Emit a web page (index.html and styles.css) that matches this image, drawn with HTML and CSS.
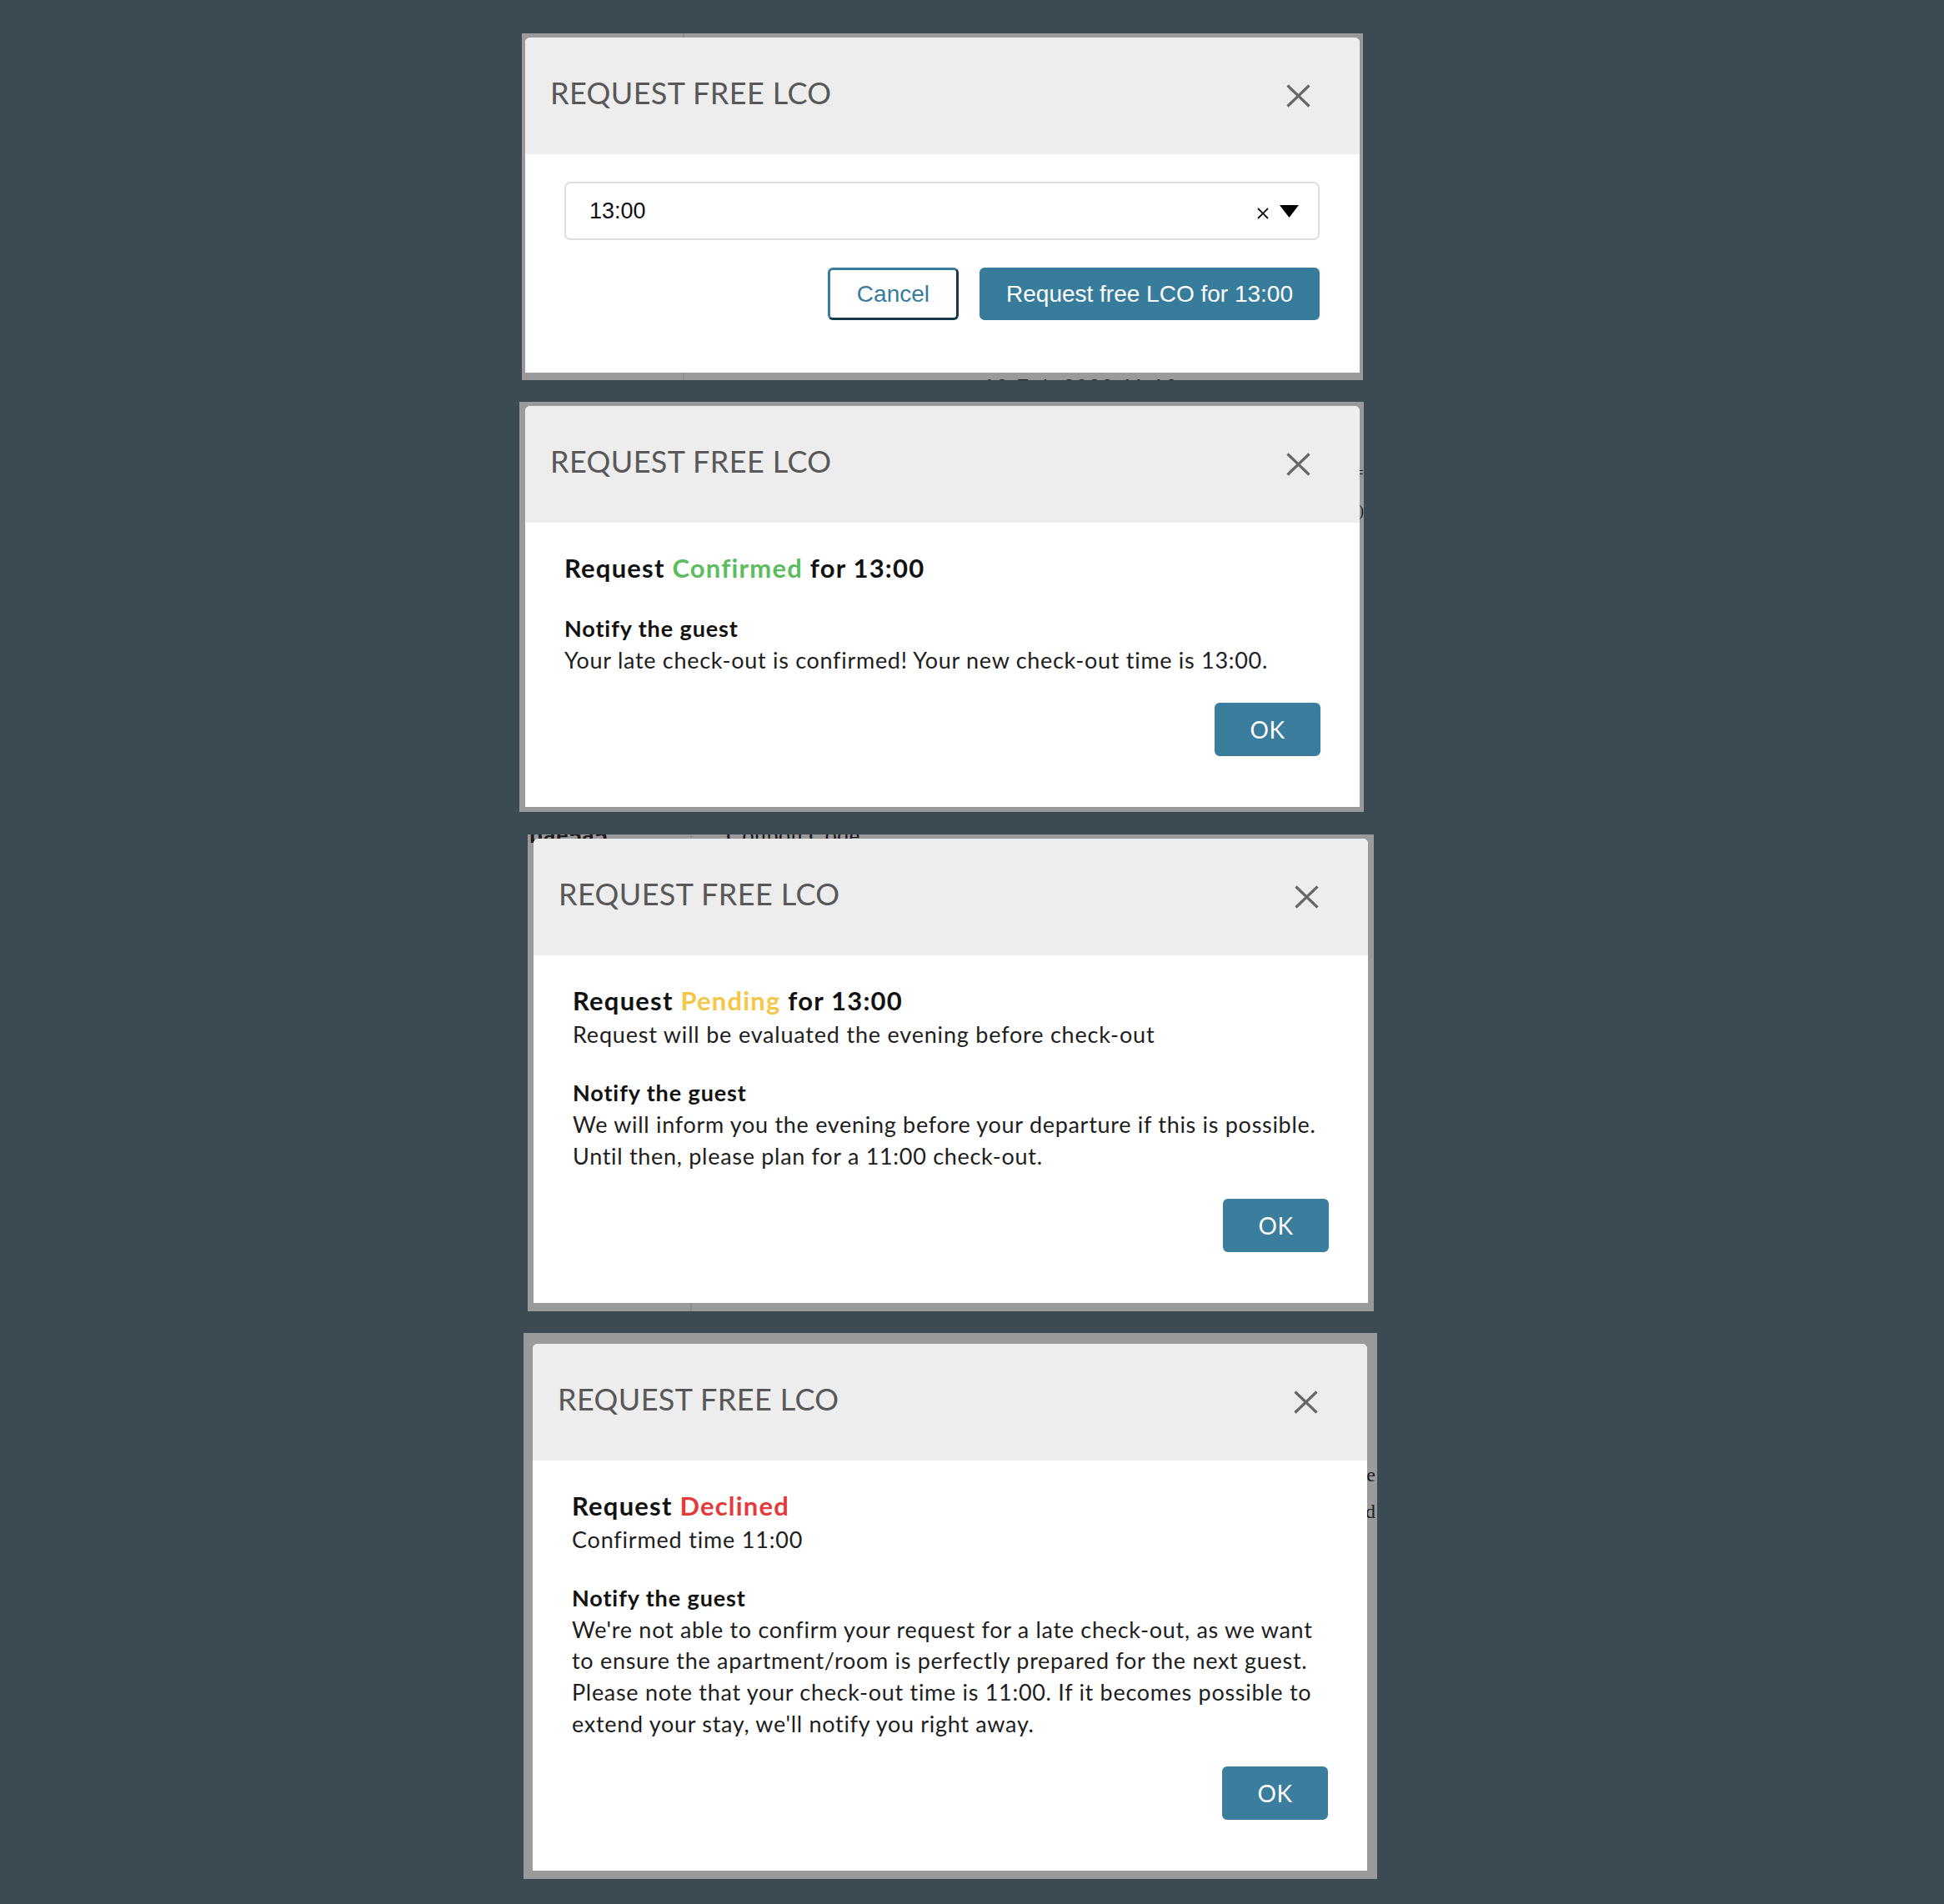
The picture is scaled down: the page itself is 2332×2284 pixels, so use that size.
FILE: index.html
```html
<!DOCTYPE html>
<html lang="en">
<head>
<meta charset="utf-8">
<title>Request free LCO</title>
<link rel="stylesheet" href="styles.css">
</head>
<body>
<main class="stack">

  <section class="frame frame--one">
    <span class="peek peek--bottom-one">10 Feb 2020 11:10</span>
    <div class="dialog">
      <header class="dialog__head">
        <h2 class="dialog__title">REQUEST FREE LCO</h2>
        <button class="dialog__close" aria-label="Close">
          <svg width="29" height="28" viewBox="0 0 29 28"><path d="M1.5 1.5 L27.5 26.5 M27.5 1.5 L1.5 26.5" stroke="#676767" stroke-width="3.2" fill="none"/></svg>
        </button>
      </header>
      <div class="dialog__body dialog__body--form">
        <div class="select">
          <span class="select__value">13:00</span>
          <span class="select__icons">
            <svg class="select__clear" width="16" height="14" viewBox="0 0 16 14"><path d="M2 1 L14 13 M14 1 L2 13" stroke="#111" stroke-width="1.8" fill="none"/></svg>
            <svg class="select__arrow" width="23" height="15" viewBox="0 0 23 15"><polygon points="0,0 23,0 11.5,15" fill="#000"/></svg>
          </span>
        </div>
        <div class="actions">
          <button class="btn btn--outline">Cancel</button>
          <button class="btn btn--primary">Request free LCO for 13:00</button>
        </div>
      </div>
    </div>
  </section>

  <section class="frame frame--two">
    <span class="peek peek--right-two-a">=</span>
    <span class="peek peek--right-two-b">)</span>
    <div class="dialog">
      <header class="dialog__head">
        <h2 class="dialog__title">REQUEST FREE LCO</h2>
        <button class="dialog__close" aria-label="Close">
          <svg width="29" height="28" viewBox="0 0 29 28"><path d="M1.5 1.5 L27.5 26.5 M27.5 1.5 L1.5 26.5" stroke="#676767" stroke-width="3.2" fill="none"/></svg>
        </button>
      </header>
      <div class="dialog__body">
        <h3 class="status">Request <span class="status__word status__word--confirmed">Confirmed</span> for 13:00</h3>
        <div class="notify">
          <h4 class="notify__title">Notify the guest</h4>
          <p class="notify__text">Your late check-out is confirmed! Your new check-out time is 13:00.</p>
        </div>
        <div class="footer">
          <button class="btn btn--ok">OK</button>
        </div>
      </div>
    </div>
  </section>

  <section class="frame frame--three">
    <span class="peek peek--top-a">bae5a5</span>
    <span class="peek peek--top-b">Coupon Code</span>
    <div class="dialog">
      <header class="dialog__head">
        <h2 class="dialog__title">REQUEST FREE LCO</h2>
        <button class="dialog__close" aria-label="Close">
          <svg width="29" height="28" viewBox="0 0 29 28"><path d="M1.5 1.5 L27.5 26.5 M27.5 1.5 L1.5 26.5" stroke="#676767" stroke-width="3.2" fill="none"/></svg>
        </button>
      </header>
      <div class="dialog__body">
        <h3 class="status">Request <span class="status__word status__word--pending">Pending</span> for 13:00</h3>
        <p class="status__sub">Request will be evaluated the evening before check-out</p>
        <div class="notify">
          <h4 class="notify__title">Notify the guest</h4>
          <p class="notify__text">We will inform you the evening before your departure if this is possible.<br>Until then, please plan for a 11:00 check-out.</p>
        </div>
        <div class="footer">
          <button class="btn btn--ok">OK</button>
        </div>
      </div>
    </div>
  </section>

  <section class="frame frame--four">
    <span class="peek peek--right-four-a">e</span>
    <span class="peek peek--right-four-b">d</span>
    <div class="dialog">
      <header class="dialog__head">
        <h2 class="dialog__title">REQUEST FREE LCO</h2>
        <button class="dialog__close" aria-label="Close">
          <svg width="29" height="28" viewBox="0 0 29 28"><path d="M1.5 1.5 L27.5 26.5 M27.5 1.5 L1.5 26.5" stroke="#676767" stroke-width="3.2" fill="none"/></svg>
        </button>
      </header>
      <div class="dialog__body">
        <h3 class="status">Request <span class="status__word status__word--declined">Declined</span></h3>
        <p class="status__sub">Confirmed time 11:00</p>
        <div class="notify">
          <h4 class="notify__title">Notify the guest</h4>
          <p class="notify__text">We're not able to confirm your request for a late check-out, as we want<br>to ensure the apartment/room is perfectly prepared for the next guest.<br>Please note that your check-out time is 11:00. If it becomes possible to<br>extend your stay, we'll notify you right away.</p>
        </div>
        <div class="footer">
          <button class="btn btn--ok">OK</button>
        </div>
      </div>
    </div>
  </section>

</main>
</body>
</html>
```

FILE: styles.css
```css
html, body {
  margin: 0;
  padding: 0;
  background: #3c4a54;
}

body {
  min-height: 2284px;
  font-family: "Lato", "Noto Sans", sans-serif;
}

.stack {
  display: flex;
  flex-direction: column;
  align-items: flex-start;
  padding-top: 40px;
  gap: 26px;
}

.frame {
  position: relative;
  overflow: hidden;
  background: #9a9a9a;
}

.frame--one {
  margin-left: 626px;
  padding: 5px 4px 9px 4px;
  background: linear-gradient(to right, transparent 193px, #8c8c8c 193px, #8c8c8c 195px, transparent 195px), #9a9a9a;
}

.frame--two {
  margin-left: 623px;
  padding: 5px 5px 6px 7px;
}

.frame--three {
  margin-top: 1px;
  margin-left: 633px;
  padding: 5px 7px 10px 7px;
  background: linear-gradient(to right, transparent 195px, #8c8c8c 195px, #8c8c8c 197px, transparent 197px), #9a9a9a;
}

.frame--four {
  margin-left: 628px;
  padding: 13px 12px 10px 11px;
}

.peek {
  position: absolute;
  color: #1e1e1e;
  font-family: "Liberation Serif", serif;
  font-size: 26px;
  line-height: 1;
  white-space: nowrap;
}

.peek--bottom-one {
  left: 554px;
  bottom: -20px;
  font-family: "Liberation Sans", sans-serif;
  font-size: 24px;
  letter-spacing: 2px;
}

.peek--top-a {
  left: 2px;
  top: -12px;
  font-family: "Liberation Sans", sans-serif;
  font-weight: bold;
  font-size: 26px;
  letter-spacing: 1px;
}

.peek--top-b {
  left: 238px;
  top: -13px;
  font-size: 29px;
}

.peek--right-two-a {
  right: 0;
  top: 76px;
  font-size: 18px;
}

.peek--right-two-b {
  right: 0;
  top: 122px;
  font-size: 18px;
}

.peek--right-four-a {
  right: 2px;
  top: 158px;
  font-size: 24px;
}

.peek--right-four-b {
  right: 2px;
  top: 202px;
  font-size: 24px;
}

.dialog {
  position: relative;
  width: 1001px;
  background: #ffffff;
  border-radius: 6px 6px 0 0;
}

.dialog__head {
  display: flex;
  justify-content: space-between;
  align-items: flex-start;
  box-sizing: border-box;
  height: 140px;
  padding: 45px 59px 0 30px;
  background: #ededed;
  border-radius: 6px 6px 0 0;
}

.dialog__title {
  margin: 0;
  font-family: "Lato", sans-serif;
  font-weight: 400;
  font-size: 36px;
  line-height: 43px;
  color: #585858;
  letter-spacing: 0.4px;
}

.dialog__close {
  display: flex;
  margin: 11px 0 0 0;
  padding: 0;
  border: 0;
  background: none;
}

.dialog__body {
  padding: 32px 47px 61px 47px;
}

.dialog__body--form {
  padding: 33px 48px 63px 47px;
}

.select {
  box-sizing: border-box;
  display: flex;
  align-items: center;
  justify-content: space-between;
  height: 70px;
  padding: 0 23px 0 28px;
  border: 2px solid #dedede;
  border-radius: 7px;
  background: #fff;
}

.select__value {
  font-family: "Liberation Sans", Arial, sans-serif;
  font-size: 27px;
  color: #111;
}

.select__icons {
  display: flex;
  align-items: center;
  gap: 12px;
}

.select__clear {
  margin-top: 5px;
}

.select__arrow {
  margin-top: 0;
}

.actions {
  display: flex;
  justify-content: flex-end;
  gap: 25px;
  margin-top: 33px;
}

.btn {
  box-sizing: border-box;
  height: 63px;
  padding: 0 29px;
  border: 3px solid #387c9b;
  border-radius: 6px;
  font-family: "Liberation Sans", Arial, sans-serif;
  font-size: 28px;
  line-height: 1;
  cursor: pointer;
}

.btn--outline {
  padding: 0 32px;
  background: #fff;
  color: #387c9b;
  border-right-color: #173a4b;
  border-bottom-color: #173a4b;
}

.btn--primary {
  background: #387c9b;
  color: #fff;
}

.btn--ok {
  width: 127px;
  height: 64px;
  padding: 0;
  background: #3a7d9c;
  border-color: #3a7d9c;
  color: #fff;
  font-family: "Lato", sans-serif;
  font-size: 28px;
  letter-spacing: 0.5px;
}

.status {
  margin: 0;
  font-family: "Lato", sans-serif;
  font-weight: 700;
  font-size: 31px;
  line-height: 44px;
  letter-spacing: 1.2px;
  color: #121212;
}

.status__word--confirmed { color: #5bbd5e; }
.status__word--pending { color: #f6c646; }
.status__word--declined { color: #e43a3a; }

.status__sub {
  margin: 0;
  font-size: 27px;
  line-height: 37.7px;
  letter-spacing: 0.8px;
  color: #1e1e1e;
}

.notify {
  margin-top: 32px;
}

.notify__title {
  margin: 0;
  font-weight: 700;
  font-size: 27px;
  line-height: 37.7px;
  letter-spacing: 0.9px;
  color: #121212;
}

.notify__text {
  margin: 0;
  font-size: 27px;
  line-height: 37.7px;
  letter-spacing: 0.7px;
  color: #1e1e1e;
}

.footer {
  display: flex;
  justify-content: flex-end;
  margin-top: 33px;
}
```
